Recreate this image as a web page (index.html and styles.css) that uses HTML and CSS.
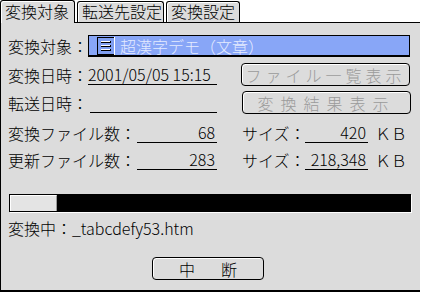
FILE: index.html
```html
<!DOCTYPE html>
<html lang="ja">
<head>
<meta charset="utf-8">
<link rel="stylesheet" href="styles.css">
</head>
<body>
<div class="window">
  <div class="tabs">
    <div class="tab active">変換対象</div>
    <div class="tab t2">転送先設定</div>
    <div class="tab t3">変換設定</div>
  </div>
  <div class="panel">
    <div class="row r1">
      <span class="label">変換対象：</span>
      <div class="target">
        <svg class="ticon" width="18" height="18" viewBox="0 0 18 18">
          <rect x="0.5" y="0.5" width="17" height="17" fill="#7f9ef0" stroke="#000"/>
          <line x1="17.5" y1="0" x2="17.5" y2="18" stroke="#fff"/>
          <rect x="4" y="4" width="10" height="2" fill="#000"/>
          <rect x="4" y="8" width="10" height="2" fill="#000"/>
          <rect x="4" y="12" width="10" height="2" fill="#000"/>
          <rect x="4" y="4" width="9" height="1" fill="#fff"/>
          <rect x="4" y="8" width="9" height="1" fill="#fff"/>
          <rect x="4" y="12" width="9" height="1" fill="#fff"/>
        </svg>
        <span class="tname">超漢字デモ（文章）</span>
      </div>
    </div>
    <div class="row r2">
      <span class="label">変換日時：</span>
      <span class="uline date">2001/05/05 15:15</span>
      <button class="btn wide">ファイル一覧表示</button>
    </div>
    <div class="row r3">
      <span class="label">転送日時：</span>
      <span class="uline blank"></span>
      <button class="btn wide spaced">変換結果表示</button>
    </div>
    <div class="row r4">
      <span class="label long">変換ファイル数：</span>
      <span class="uline count">68</span>
      <span class="size-label">サイズ：</span>
      <span class="uline size">420</span>
      <span class="unit">ＫＢ</span>
    </div>
    <div class="row r5">
      <span class="label long">更新ファイル数：</span>
      <span class="uline count">283</span>
      <span class="size-label">サイズ：</span>
      <span class="uline size">218,348</span>
      <span class="unit">ＫＢ</span>
    </div>
    <div class="progress"><div class="fill" style="width:47px"></div></div>
    <div class="status">変換中：_tabcdefy53.htm</div>
    <div class="actions">
      <button class="btn stop">中　断</button>
    </div>
  </div>
</div>
</body>
</html>
```
FILE: styles.css
```css
* { box-sizing: border-box; }
html, body { margin: 0; padding: 0; background: #fff; }
body {
  font-family: "Noto Sans CJK JP", "Noto Sans", sans-serif;
  font-size: 16px;
  font-weight: 300;
  color: #000;
}
.window { width: 421px; height: 292px; }

.tabs {
  display: flex;
  align-items: flex-end;
  gap: 2px;
  height: 23px;
  border-bottom: 1px solid #000;
  margin-right: 1px;
}
.tab {
  height: 21px;
  border: 1px solid #000;
  border-bottom: none;
  border-radius: 3px 3px 0 0;
  background: #dcdcdc;
  box-shadow: inset 1px 1px 0 #fff;
  line-height: 19px;
  padding: 0 3px 0 4px;
  white-space: nowrap;
}
.tab.active {
  height: 23px;
  margin-bottom: -1px;
  width: 75px;
  padding-top: 1px;
  position: relative;
  z-index: 1;
}
.tab.t2 { width: 87px; }
.tab.t3 { width: 74px; }

.panel {
  width: 420px;
  height: 269px;
  background: #dcdcdc;
  border-left: 1px solid #000;
  border-bottom: 2px solid #000;
  padding: 12px 0 0 7px;
}
.row {
  display: flex;
  align-items: center;
  height: 23px;
  line-height: 20px;
  white-space: nowrap;
}
.r1 { height: 22px; }
.r2 { margin-top: 6px; }
.r3 { margin-top: 5px; }
.r4 { margin-top: 7px; }
.r5 { margin-top: 4px; }
.label { width: 80px; }
.label.long { width: 129px; }

.target {
  width: 322px;
  height: 22px;
  background: #88a6f7;
  border: 1px solid #000;
  border-bottom-width: 2px;
  display: flex;
  align-items: center;
  padding-left: 8px;
}
.ticon { display: block; }
.tname { color: #e4ebff; margin-left: 5px; }

.uline {
  border-bottom: 1px solid #000;
  height: 20px;
  line-height: 19px;
}
.date { width: 129px; }
.blank { width: 127px; margin-left: 2px; }
.count { width: 80px; text-align: right; padding-right: 2px; }
.size-label { margin-left: 25px; width: 63px; }
.size { width: 63px; text-align: right; padding-right: 2px; }
.unit { margin-left: 7px; }

.btn {
  font-family: inherit;
  font-size: 16px;
  font-weight: 300;
  background: #dcdcdc;
  border: 1px solid #000;
  border-radius: 4px;
  box-shadow: inset 1px 1px 0 #fff;
  padding: 0;
  height: 23px;
  line-height: 20px;
  color: #9a9a9a;
  cursor: default;
}
.btn.wide { width: 169px; margin-left: 24px; letter-spacing: 4px; }
.r3 .btn.wide { margin-left: 25px; }
.btn.spaced { letter-spacing: 7px; }

.progress {
  margin-top: 23px;
  margin-left: 1px;
  width: 402px;
  height: 18px;
  background: #000;
  border: 1px solid #000;
  box-shadow: 1px 1px 0 #fff;
  display: flex;
}
.fill {
  height: 100%;
  background: #e4e4e4;
  border-top: 1px solid #fff;
  border-left: 1px solid #fff;
  border-right: 1px solid #999;
}
.status { margin-top: 6px; height: 20px; line-height: 20px; }
.actions { margin-top: 19px; display: flex; }
.btn.stop { width: 112px; margin-left: 144px; color: #000; letter-spacing: 5px; padding-left: 5px; }
```
